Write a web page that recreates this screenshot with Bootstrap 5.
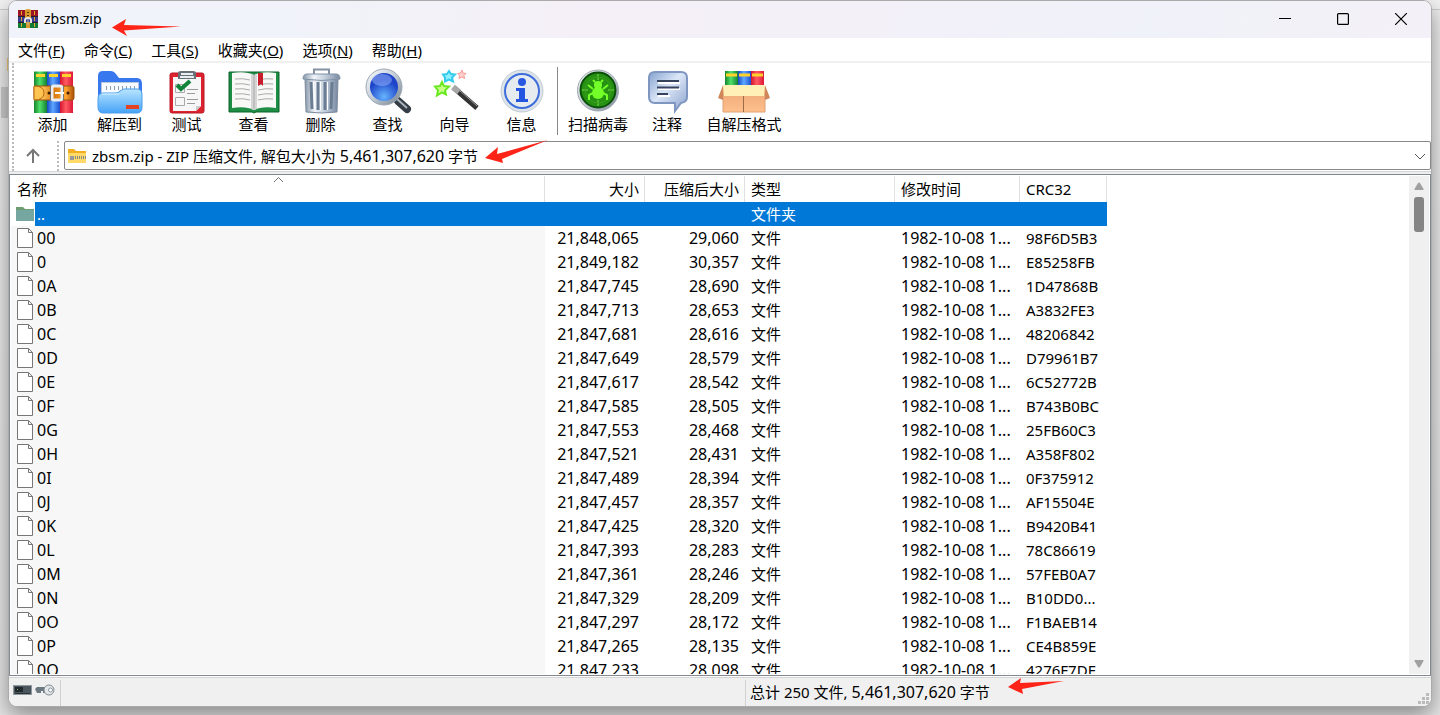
<!DOCTYPE html>
<html lang="zh-CN">
<head>
<meta charset="utf-8">
<meta name="viewport" content="width=device-width, initial-scale=1">
<title>zbsm.zip</title>
<link href="https://cdn.jsdelivr.net/npm/bootstrap@5.3.0/dist/css/bootstrap.min.css" rel="stylesheet">
<style>
body{font-family:"Noto Sans","Noto Sans CJK SC",sans-serif;font-size:15px;line-height:24px;color:#000;height:100vh;padding:0 8px 8px;overflow:hidden;background:linear-gradient(#f3f3f3 0 9px,#ccc 9px 10px,#efefef 10px,#e6e6e6 100%)}
.desk-item{position:absolute;left:1px;top:87px;width:12px;height:31px;background:#ccc}
.desk-fold{position:absolute;left:7px;top:58px;width:4px;height:13px;background:#f2ce72}
.app{height:100%;border:1px solid #aaa;border-radius:9px;background:#fff;box-shadow:0 8px 22px rgba(0,0,0,.42);position:relative;overflow:hidden}
.titlebar{height:37px;font-size:14px;background:linear-gradient(100deg,#f0f3f9 20%,#f5f0f7 40%,#f3f0f8 60%,#f0f2f9 80%,#f4f0f7);padding-right:1px;padding-bottom:1px}
.titlebar svg.logo{margin-left:9px;margin-right:6px}
.capbtn{width:58px;height:36px;border:0;background:none;padding:0;display:flex;align-items:center;justify-content:center}
.menus{height:25px;border-bottom:2px solid #f0f0f0;padding-left:9px;gap:19px}
.menus a{color:#000;text-decoration:none;line-height:24px;white-space:nowrap}
.tools{height:78px}
.tool{width:67px;border:0;background:none;padding:4px 0 0;line-height:20px;white-space:nowrap;color:#000;display:flex;flex-direction:column;align-items:center}
.tool svg{display:block;margin-bottom:-1px;flex-shrink:0}
.tool.scan{width:74px}.tool.note{width:64px}.tool.sfx{width:90px}
.tsep{width:1px;height:68px;background:#888;margin:4px 3px 0 2px}
.grips{border-left:2px dotted #bbb;margin-left:3px;padding-left:5px}
.addr{height:30px}
.upbtn{width:28px;border:0;background:none;padding:0 0 3px}
.grip2{border-left:2px dotted #bbb;margin:0 5px 0 10px;height:30px}
.path{height:29px;border:1px solid #888;border-radius:2px;padding:0 2px 0 3px;background:#fff}
.path output{margin-left:6px;white-space:nowrap}
.drop{border:0;background:none;padding:0;width:14px;display:flex}
.edge{height:3px;border-top:1px solid #d5d5d5;background:#eee}
.list{border:1px solid #828790;padding:1px;min-height:0}
.rows{overflow:hidden;min-width:0}
.files{table-layout:fixed;width:1096px;border-collapse:separate;border-spacing:0}
.files th{font-weight:400;height:26px;padding:0 5px 0 6px;border-right:1px solid #e0e0e0;line-height:24px}
.files td{height:24px;line-height:24px;padding:0 6px;white-space:nowrap;overflow:hidden}
.files td:first-child{background:#f7f7f7;padding-left:5px}
.files td svg{vertical-align:top;margin-right:2px}
.files td.num,.files th.num{text-align:right}
.files .lat,.big{font-size:16px}
.files .up td{background:#0078d7;color:#fff}
.files .up td:first-child{background:linear-gradient(90deg,#fff 24px,#0078d7 24px)}
.vbar{width:20px;background:#f0f0f0}
.thumb{width:10px;height:35px;border-radius:3px;background:#858585}
.status{height:29px;background:#f0f0f0;border-top:1px solid #d5d5d5;margin-top:1px}
.status .left{width:52px;border-right:1px solid #d0d0d0;margin-top:2px;padding:4px 0 0 4px;gap:3px}
.status .mid{width:685px;border-right:1px solid #d0d0d0;margin-top:2px}
.status .total{padding:2px 0 0 4px}
.mark-arrow{position:absolute;fill:#ff2418;pointer-events:none}
</style>
</head>
<body>
<div class="desk-fold"></div><div class="desk-item"></div>
<svg width="0" height="0" class="position-absolute" aria-hidden="true"><defs>
<linearGradient id="g" x2="1"><stop stop-color="#15852c"/><stop offset=".45" stop-color="#4fe06a"/><stop offset="1" stop-color="#138030"/></linearGradient>
<linearGradient id="b" x2="1"><stop stop-color="#1748c4"/><stop offset=".45" stop-color="#5da8ff"/><stop offset="1" stop-color="#1d4fd0"/></linearGradient>
<linearGradient id="r" x2="1"><stop stop-color="#d4142f"/><stop offset=".45" stop-color="#ff5a62"/><stop offset="1" stop-color="#dc1737"/></linearGradient>
<linearGradient id="o" x2="1"><stop stop-color="#b95a08"/><stop offset=".2" stop-color="#ffc65a"/><stop offset=".5" stop-color="#d9780f"/><stop offset=".8" stop-color="#ffa531"/><stop offset="1" stop-color="#a94d05"/></linearGradient>
<linearGradient id="fd" y2="1" x2="0"><stop stop-color="#b9e5ff"/><stop offset="1" stop-color="#46a3f7"/></linearGradient>
<linearGradient id="st" x2="1"><stop stop-color="#8797aa"/><stop offset=".3" stop-color="#f0f5fa"/><stop offset=".65" stop-color="#b9c7d6"/><stop offset="1" stop-color="#7888a0"/></linearGradient>
<linearGradient id="rim" x2="1" y2="1"><stop stop-color="#f4f7fa"/><stop offset=".5" stop-color="#c3ccd6"/><stop offset="1" stop-color="#7a8794"/></linearGradient>
<radialGradient id="ln" cy=".8"><stop stop-color="#66b4ff"/><stop offset="1" stop-color="#1e45c9"/></radialGradient>
<linearGradient id="nt" x2="1" y2="1"><stop stop-color="#86a2cf"/><stop offset=".45" stop-color="#dbe6f7"/><stop offset="1" stop-color="#8aa2cc"/></linearGradient>
<linearGradient id="bx" x2="0" y2="1"><stop stop-color="#e9a673"/><stop offset="1" stop-color="#ffc08d"/></linearGradient>
</defs></svg>

<main class="app d-flex flex-column">
<header class="titlebar d-flex align-items-center flex-shrink-0">
 <svg class="logo" width="20" height="20" viewBox="0 0 20 20"><path fill="#9c1524" d="M0 1h20v6H0z"/><path fill="#3b3a92" d="M0 7h20v6H0z"/><path fill="#137a35" d="M0 13h20v6H0z"/><path stroke="#222" d="M0 7.500h20M0 13.500h20"/><path stroke="#e0a92c" d="M3.500 2v4M3.500 8v4M3.500 14v4M16.500 2v4M16.500 8v4M16.500 14v4"/><path fill="#d9992a" d="M7 1q3-2 6 0v9H7zM8 13h4v6H8z"/><path fill="#5b3408" d="M9 3h2v1H9zM9 6h2v1H9z"/><path d="M7 14v-3q0-2 3-2t3 2v3" fill="none" stroke="#e4e4e4" stroke-width="2"/><path d="M10 10v6" stroke="#bbb"/></svg>
 <span class="flex-grow-1">zbsm.zip</span>
 <button class="capbtn" aria-label="最小化"><svg width="12" height="12"><path d="M0 5.500h12" stroke="#000"/></svg></button>
 <button class="capbtn" aria-label="最大化"><svg width="12" height="12"><rect x=".6" y=".6" width="10.800" height="10.800" rx="1" fill="none" stroke="#000" stroke-width="1.200"/></svg></button>
 <button class="capbtn" aria-label="关闭"><svg width="12" height="12"><path d="M0 0l12 12M12 0L0 12" stroke="#000" stroke-width="1.200"/></svg></button>
</header>
<nav class="menus d-flex flex-shrink-0">
 <a href="#">文件(<u>F</u>)</a><a href="#">命令(<u>C</u>)</a><a href="#">工具(<u>S</u>)</a><a href="#">收藏夹(<u>O</u>)</a><a href="#">选项(<u>N</u>)</a><a href="#">帮助(<u>H</u>)</a>
</nav>
<div class="grips flex-shrink-0">
<div class="tools d-flex align-items-start">
 <button class="tool"><svg width="56" height="48" viewBox="0 0 56 48"><path fill="url(#g)" d="M9 4h13v42H9z"/><path fill="url(#b)" d="M22 4h13v42H22z"/><path fill="url(#r)" d="M35 4h13v42H35z"/><path stroke="#ffd42c" stroke-width="3" d="M11 8.500h9M24 8.500h9M37 8.500h9"/><path stroke="#ffffff80" d="M9 4.500h39"/><path fill="url(#o)" stroke="#9d520b" d="M9 20q0-1 2-1h36q2 0 2 2v10q0 2-2 2H11q-2 0-2-2z"/><path fill="#ffc451" stroke="#b96a10" d="M9 19q10 0 10 7t-10 7z"/><rect x="27" y="19" width="10" height="14" rx="2" fill="none" stroke="#e9edf0" stroke-width="3"/><path stroke="#777" d="M25.500 19v14M38.500 19v14"/><path stroke="#fff" stroke-width="2" d="M30 26h9"/><circle cx="24" cy="26" r="1.500" fill="#3b1c02"/><circle cx="43" cy="26" r="1.500" fill="#3b1c02"/></svg>添加</button>
 <button class="tool"><svg width="56" height="48" viewBox="0 0 56 48"><path fill="#3878ee" d="M6 9q0-5 5-5h8q3 0 5 3l3 4h18q5 0 5 6v20H6z"/><path fill="#f8fbff" stroke="#bac8df" d="M9.500 15.500h37v20h-37z"/><path d="M14 21h30" stroke="#8c9baf" stroke-width="4" stroke-dasharray="1 3"/><path fill="url(#fd)" stroke="#4a9dee" d="M6 32q0-6 5-6h13q2 0 4-2l2-1q1-1 3-1h12q5 0 5 6v12q0 6-5 6H11q-5 0-5-6z"/><path d="M10 27h17" stroke="#d6f1ff"/><path fill="#e44222" d="M34 38h13v4H34z"/></svg>解压到</button>
 <button class="tool"><svg width="56" height="48" viewBox="0 0 56 48"><rect x="11" y="6" width="34" height="40" rx="2" fill="#dc222e" stroke="#b81825"/><path fill="#f7f7f7" d="M14 10h28v29l-5 5H14z"/><path fill="#ccc" d="M42 39l-5 5v-5z"/><path fill="#667078" d="M19 12V6q0-2 3-2h12q3 0 3 2v6z"/><path d="M22 7h12M21 10h14" stroke="#e8edf1" stroke-width="2"/><path fill="none" stroke="#aaa" d="M16.500 17.500h9v8h-9zM16.500 30.500h9v8h-9z"/><path d="M18 18l4 4 9-8" fill="none" stroke="#12843a" stroke-width="4"/><path stroke="#9b9b9b" d="M28 22.500h11M28 26.500h8M28 32.500h11M28 36.500h8"/></svg>测试</button>
 <button class="tool"><svg width="56" height="48" viewBox="0 0 56 48"><path fill="#1e8d45" stroke="#0b622a" d="M3 5h50v40H30l-2 1-2-1H3z"/><path fill="#f8f8f6" d="M6 6q14-2 22 2 8-4 22-2v35q-14-2-22 2-8-4-22-2z"/><path fill="#d5d5d5" d="M25 7l3 1 3-1v35l-3 1-3-1z"/><path fill="none" stroke="#a9aaab" d="M9 12q8-1 15 1M9 17q8-1 15 1M9 22q8-1 15 1M9 27q8-1 15 1M9 32q8-1 15 1M32 13q8-2 15-1M32 18q8-2 15-1M32 23q8-2 15-1M32 28q8-2 15-1M32 33q8-2 15-1M28 8v34"/><path fill="#c91d2b" d="M32 6h5v13l-2-2-3 2z"/></svg>查看</button>
 <button class="tool"><svg width="56" height="48" viewBox="0 0 56 48"><path fill="none" stroke="#8492a3" stroke-width="2" d="M21 7V2.500h15V7"/><path fill="url(#st)" stroke="#7b8a9c" d="M12 12h33l-1 33q-15 2-31 0z"/><path stroke="#6b7d92" stroke-width="3" d="M18 15l1 27M25 15v28M32 15v28M39 15l-1 27"/><path stroke="#fff" d="M20.500 15l1 27M27.500 15v28M34.500 15v28"/><path fill="url(#st)" stroke="#8191a5" d="M10 12q0-5 4-5h29q4 0 4 5-18 3-37 0z"/></svg>删除</button>
 <button class="tool"><svg width="56" height="48" viewBox="0 0 56 48"><path d="M38 34l9 8" stroke="#353e47" stroke-width="8" stroke-linecap="round"/><path d="M37 32l10 9" stroke="#aab3bc" stroke-width="2"/><circle cx="24" cy="20" r="16" fill="url(#ln)" stroke="url(#rim)" stroke-width="4"/><circle cx="24" cy="20" r="18" fill="none" stroke="#9da8b4"/><ellipse cx="22" cy="13" rx="10" ry="6" fill="#9bb9ff" opacity=".5"/></svg>查找</button>
 <button class="tool"><svg width="56" height="48" viewBox="0 0 56 48"><path d="M27 21l23 20" stroke="#333" stroke-width="5"/><path d="M26 20l6 5" stroke="#a7a7a7" stroke-width="6"/><path d="M32 23l18 16" stroke="#999"/><path fill="#8cf0ff" stroke="#35cbed" stroke-width="2" d="M22 4l2 3 4 .5-3 3 1 4-4-2-4 2v-4l-2-3 4-.5z"/><path fill="#c8ff86" stroke="#6be824" stroke-width="2" d="M15 15l2 4 5 .5-4 4 1 4-4-2-5 3 1-5-3-4 5-.5z"/><path fill="#ffd0cc" stroke="#fa9b96" d="M35 3l1 3 3 .5-2 2 .5 3-2.500-1.500-3 1.500.5-3-2-2 3-.5z"/></svg>向导</button>
 <button class="tool"><svg width="56" height="48" viewBox="0 0 56 48"><circle cx="28" cy="24" r="21" fill="#dce3e9" stroke="#c3ccd4"/><circle cx="28" cy="24" r="17" fill="#e6ebf0" stroke="#3d6ddb" stroke-width="2"/><circle cx="28" cy="15" r="4" fill="#2859e0"/><path fill="#2455e0" d="M22 21h9v11h3v3H22v-3h3v-8h-3z"/></svg>信息</button>
 <div class="tsep"></div>
 <button class="tool scan"><svg width="56" height="48" viewBox="0 0 56 48"><circle cx="28" cy="23.500" r="20.500" fill="url(#rim)" stroke="#a0a9b1"/><circle cx="28" cy="23" r="17.500" fill="#269112" stroke="#0b4f0a" stroke-width="2"/><path d="M28 7v6M28 33v6M12 23h6M38 23h6" stroke="#4fb52c" stroke-width="2"/><circle cx="28" cy="23" r="13" fill="none" stroke="#38a01e"/><g stroke="#73ff28" fill="none" stroke-width="2"><path d="M23 22l-5-4M33 22l5-4M23 26l-4 2v5M33 26l4 2v5M25 15l-2-2M31 15l2-2"/></g><circle cx="28" cy="18" r="4" fill="#73ff28"/><ellipse cx="28" cy="26" rx="6" ry="6" fill="#73ff28"/></svg>扫描病毒</button>
 <button class="tool note"><svg width="56" height="48" viewBox="0 0 56 48"><path fill="url(#nt)" stroke="#7f97c0" stroke-width="2" d="M16 5h26q6 0 6 6v19q0 5-6 6l-6 8v-8H16q-6 0-6-6V11q0-6 6-6z"/><path stroke="#fff" stroke-width="2" d="M19 16h22M19 22h22M19 29h12"/><path stroke="#35435f" stroke-width="2" d="M18 14h22M18 20.500h22M18 27h11"/></svg>注释</button>
 <button class="tool sfx"><svg width="56" height="48" viewBox="0 0 56 48"><path fill="url(#g)" d="M9 4h13v20H9z"/><path fill="url(#b)" d="M22 4h13v20H22z"/><path fill="url(#r)" d="M35 4h13v20H35z"/><path d="M10 8h11M23 8h11M36 8h11" stroke="#ffd12d" stroke-width="3"/><path fill="url(#bx)" stroke="#e0a070" d="M7 20h42v25H7z"/><path fill="#fff0b7" d="M7 18h42l-1 11H8z"/><path fill="#cf875a" d="M7 18L2 31l5 2zM49 18l5 13-5 2z"/><path stroke="#9e6b49" d="M27.500 29v16"/></svg>自解压格式</button>
</div>
<div class="addr d-flex">
 <button class="upbtn" aria-label="向上"><svg width="16" height="16" viewBox="0 0 16 16"><path d="M8 15V2M2 8l6-6 6 6" fill="none" stroke="#777" stroke-width="2"/></svg></button>
 <div class="grip2"></div>
 <div class="path d-flex align-items-center flex-grow-1">
  <svg width="18" height="14" viewBox="0 0 18 14"><path fill="#f1ae22" d="M0 0h6l2 2h10v5H0z"/><path fill="#ffda68" d="M0 4h18v10H0z"/><path stroke="#888" stroke-width="3" stroke-dasharray="1 1" d="M5 8.500h13"/><path fill="#999" d="M2 7h4v4H2z"/></svg>
  <output class="flex-grow-1">zbsm.zip - ZIP 压缩文件, 解包大小为 <span class="big">5,461,307,620</span> 字节</output>
  <button class="drop" aria-label="展开"><svg width="12" height="12"><path d="M1 4l5 5 5-5" fill="none" stroke="#555"/></svg></button>
 </div>
</div>
</div>
<div class="edge flex-shrink-0"></div>
<section class="list d-flex flex-grow-1">
 <div class="rows flex-grow-1 position-relative">
 <svg class="position-absolute" style="left:262px;top:0" width="11" height="7"><path d="M1 6l4.500-4.500L10 6" fill="none" stroke="#777"/></svg>
 <table class="files"><colgroup><col style="width:534px"><col style="width:100px"><col style="width:100px"><col style="width:150px"><col style="width:125px"><col style="width:87px"></colgroup>
 <thead><tr><th>名称</th><th class="num">大小</th><th class="num">压缩后大小</th><th>类型</th><th>修改时间</th><th>CRC32</th></tr></thead>
 <tbody id="entries"><tr class="up"><td><svg width="19" height="24" viewBox="0 0 19 24"><path fill="#6f9d73" d="M0 5h7l2 2h9v12H0z"/><path fill="#75a6a0" d="M0 8h18v10q0 1-1 1H1q-1 0-1-1z"/></svg>..</td><td></td><td></td><td>文件夹</td><td></td><td></td></tr></tbody>
 </table></div>
 <div class="vbar d-flex flex-column align-items-center flex-shrink-0">
  <svg width="10" height="21"><path d="M1 14h8q1 0 .5-1L6 7Q5 6 4 7L.5 13q-.5 1 .5 1z" fill="#a0a0a0"/></svg>
  <div class="thumb"></div>
  <svg class="mt-auto" width="10" height="16"><path d="M1 2h8q1 0 .5 1L6 9Q5 10 4 9L.5 3Q0 2 1 2z" fill="#a0a0a0"/></svg>
 </div>
</section>
<footer class="status d-flex flex-shrink-0 position-relative">
 <div class="left d-flex">
  <svg width="19" height="12" viewBox="0 0 19 12"><rect x=".5" y="1.500" width="18" height="9" fill="#4a555e" stroke="#8e989f"/><path fill="#22282d" d="M2 3h8v5H2z"/><path fill="#6fc34a" d="M4 5h1v1H4z"/><path stroke="#2a3238" d="M2 9.500h15"/></svg>
  <svg width="20" height="12" viewBox="0 0 20 12"><path fill="#6c7880" d="M0 5l2-2h8v6H8V7H6v2H2z"/><circle cx="14" cy="6" r="5" fill="#e4e8ea" stroke="#7d888f"/><circle cx="15.500" cy="6" r="2" fill="#fff" stroke="#8b959c"/></svg>
 </div>
 <div class="mid"></div>
 <div class="total">总计 250 文件, <span class="big">5,461,307,620</span> 字节</div>
 <svg class="position-absolute end-0 bottom-0" width="14" height="14"><path fill="#bbb" d="M9 1h3v3H9zM5 5h3v3H5zM9 5h3v3H9zM1 9h3v3H1zM5 9h3v3H5zM9 9h3v3H9z"/></svg>
</footer>
</main>
<svg class="mark-arrow" style="left:111px;top:18px" width="72" height="20"><path d="M1 9.500L15 1l-2 6 57 1.500-57 4 3 5.500z"/></svg>
<svg class="mark-arrow" style="left:484px;top:139px" width="66" height="26"><path d="M1 19L14 8l-1 7L64 1 18 20l1 4z"/></svg>
<svg class="mark-arrow" style="left:1007px;top:677px" width="58" height="19"><path d="M1 10L14 1l-1 5 44-2-42 8 1 5z"/></svg>
<script src="https://cdn.jsdelivr.net/npm/bootstrap@5.3.0/dist/js/bootstrap.bundle.min.js"></script>
<script>
const files = `00|21,848,065|29,060|98F6D5B3
0|21,849,182|30,357|E85258FB
0A|21,847,745|28,690|1D47868B
0B|21,847,713|28,653|A3832FE3
0C|21,847,681|28,616|48206842
0D|21,847,649|28,579|D79961B7
0E|21,847,617|28,542|6C52772B
0F|21,847,585|28,505|B743B0BC
0G|21,847,553|28,468|25FB60C3
0H|21,847,521|28,431|A358F802
0I|21,847,489|28,394|0F375912
0J|21,847,457|28,357|AF15504E
0K|21,847,425|28,320|B9420B41
0L|21,847,393|28,283|78C86619
0M|21,847,361|28,246|57FEB0A7
0N|21,847,329|28,209|B10DD0...
0O|21,847,297|28,172|F1BAEB14
0P|21,847,265|28,135|CE4B859E
0Q|21,847,233|28,098|4276F7DF`.split('\n');
const page = '<svg width="19" height="24" viewBox="0 0 19 24"><path d="M1.500 2.500h11l4 4v15h-15zM12.500 2.500v4h4" fill="#fff" stroke="#777"/></svg>';
document.getElementById('entries').insertAdjacentHTML('beforeend', files.map(f => {
  const [name, size, packed, crc] = f.split('|');
  return `<tr><td class="lat">${page}${name}</td><td class="num lat">${size}</td><td class="num lat">${packed}</td><td>文件</td><td class="lat">1982-10-08 1...</td><td>${crc}</td></tr>`;
}).join(''));
</script>
</body>
</html>
